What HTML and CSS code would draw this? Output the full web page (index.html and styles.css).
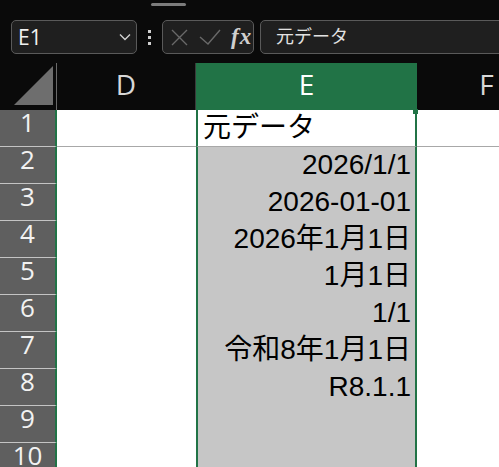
FILE: index.html
```html
<!DOCTYPE html>
<html lang="ja">
<head>
    <meta charset="UTF-8">
    <meta name="viewport" content="width=device-width, initial-scale=1.0">
    <title>元データ - Book1</title>
    <link rel="stylesheet" href="styles.css">
</head>
<body>
    <div class="topbar"><div class="grip"></div></div>

    <div class="toolbar">
        <div class="namebox">
            <span>E1</span>
            <svg class="chevron" width="12" height="8" viewBox="0 0 12 8"><path d="M1 1.5 L6 6.5 L11 1.5" /></svg>
        </div>
        <div class="kebab"><i></i><i></i><i></i></div>
        <div class="fnbox">
            <svg class="fn-icon" width="17" height="17" viewBox="0 0 17 17"><path d="M1 1 L16 16 M16 1 L1 16" /></svg>
            <svg class="fn-icon" width="22" height="16" viewBox="0 0 22 16"><path d="M1 8 L9 15 L21 1" /></svg>
            <span class="fx">fx</span>
        </div>
        <div class="formula">元データ</div>
    </div>

    <div class="sheet">
        <div class="corner">
            <svg width="56" height="47" viewBox="0 0 56 47"><polygon points="14,42 53,42 53,3" /></svg>
        </div>
        <div class="colhead">D</div>
        <div class="colhead active">E</div>
        <div class="colhead">F</div>

        <div class="rowhead">1</div>
        <div class="cell first"></div>
        <div class="cell sel first left">元データ</div>
        <div class="cell first"></div>

        <div class="rowhead">2</div>
        <div class="cell"></div>
        <div class="cell sel fill">2026/1/1</div>
        <div class="cell"></div>

        <div class="rowhead">3</div>
        <div class="cell"></div>
        <div class="cell sel fill">2026-01-01</div>
        <div class="cell"></div>

        <div class="rowhead">4</div>
        <div class="cell"></div>
        <div class="cell sel fill">2026年1月1日</div>
        <div class="cell"></div>

        <div class="rowhead">5</div>
        <div class="cell"></div>
        <div class="cell sel fill">1月1日</div>
        <div class="cell"></div>

        <div class="rowhead">6</div>
        <div class="cell"></div>
        <div class="cell sel fill">1/1</div>
        <div class="cell"></div>

        <div class="rowhead">7</div>
        <div class="cell"></div>
        <div class="cell sel fill">令和8年1月1日</div>
        <div class="cell"></div>

        <div class="rowhead">8</div>
        <div class="cell"></div>
        <div class="cell sel fill">R8.1.1</div>
        <div class="cell"></div>

        <div class="rowhead">9</div>
        <div class="cell"></div>
        <div class="cell sel fill"></div>
        <div class="cell"></div>

        <div class="rowhead">10</div>
        <div class="cell"></div>
        <div class="cell sel fill"></div>
        <div class="cell"></div>
    </div>
</body>
</html>
```

FILE: styles.css
```css
* {
    margin: 0;
    padding: 0;
    box-sizing: border-box;
}

body {
    background: #0a0a0a;
    width: 499px;
    height: 467px;
    overflow: hidden;
    font-family: 'Open Sans', 'Noto Sans CJK JP', sans-serif;
}

/* window drag strip */
.topbar {
    height: 20px;
    padding-top: 3px;
    padding-left: 151px;
}

.grip {
    width: 35px;
    height: 3px;
    border-radius: 2px;
    background: #7c7c7c;
}

/* name box + formula bar */
.toolbar {
    display: flex;
    align-items: center;
    height: 34px;
    padding-left: 11px;
    margin-bottom: 9px;
}

.namebox,
.fnbox,
.formula {
    height: 34px;
    background: #1f1f1f;
    border: 1px solid #5a5a5a;
    border-radius: 5px;
}

.namebox {
    width: 126px;
    display: flex;
    align-items: center;
    justify-content: space-between;
    padding: 0 5px 0 6px;
    color: #f0f0f0;
    font-size: 21px;
}

.chevron path,
.fn-icon path {
    fill: none;
    stroke-width: 1.4;
}

.chevron path {
    stroke: #d0d0d0;
}

.kebab {
    width: 25px;
    display: flex;
    flex-direction: column;
    align-items: center;
    gap: 3px;
}

.kebab i {
    width: 3px;
    height: 3px;
    background: #d0d0d0;
}

.fnbox {
    width: 92px;
    display: flex;
    align-items: center;
    padding-left: 8px;
    gap: 11px;
}

.fn-icon path {
    stroke: #696969;
}

.fx {
    font-family: 'Liberation Serif', serif;
    font-style: italic;
    font-weight: bold;
    font-size: 23px;
    color: #cfcfcf;
    margin-left: -1px;
    letter-spacing: 1px;
}

.formula {
    flex: 1;
    margin-left: 6px;
    margin-right: -20px;
    padding-left: 15px;
    color: #e2e2e2;
    font-size: 18px;
    line-height: 31px;
}

/* the worksheet grid */
.sheet {
    display: grid;
    grid-template-columns: 57px 139px 221px 140px;
    grid-template-rows: 47px;
    grid-auto-rows: 37px;
    width: 557px;
}

.corner {
    border-right: 1px solid #6a6a6a;
}

.corner polygon {
    fill: #6e6e6e;
}

.colhead {
    color: #d8d8d8;
    font-size: 28px;
    line-height: 43px;
    text-align: center;
    border-right: 1px solid #3a3a3a;
}

.colhead.active {
    background: #217346;
    color: #fff;
    border-right: 0;
}

.rowhead {
    background: #5f5f5f;
    color: #f2f2f2;
    font-size: 26px;
    line-height: 25px;
    text-align: center;
    border-bottom: 1px solid #c4c4c4;
    border-right: 2px solid #217346;
}

.cell {
    background: #fff;
    font-family: 'Liberation Sans', 'Noto Sans CJK JP', sans-serif;
    font-size: 28px;
    line-height: 36px;
    color: #000;
    white-space: nowrap;
}

.cell.first {
    border-bottom: 1px solid #a8a8a8;
}

.cell.sel {
    border-left: 2px solid #217346;
    border-right: 2px solid #217346;
    text-align: right;
    padding-right: 4px;
    position: relative;
}

.cell.sel.left {
    text-align: left;
    padding-left: 5px;
}

.cell.fill {
    background: #c6c6c6;
}

/* fill handle on the selection */
.cell.sel.first::after {
    content: '';
    position: absolute;
    top: -1px;
    right: -3px;
    width: 5px;
    height: 5px;
    background: #217346;
}
```
